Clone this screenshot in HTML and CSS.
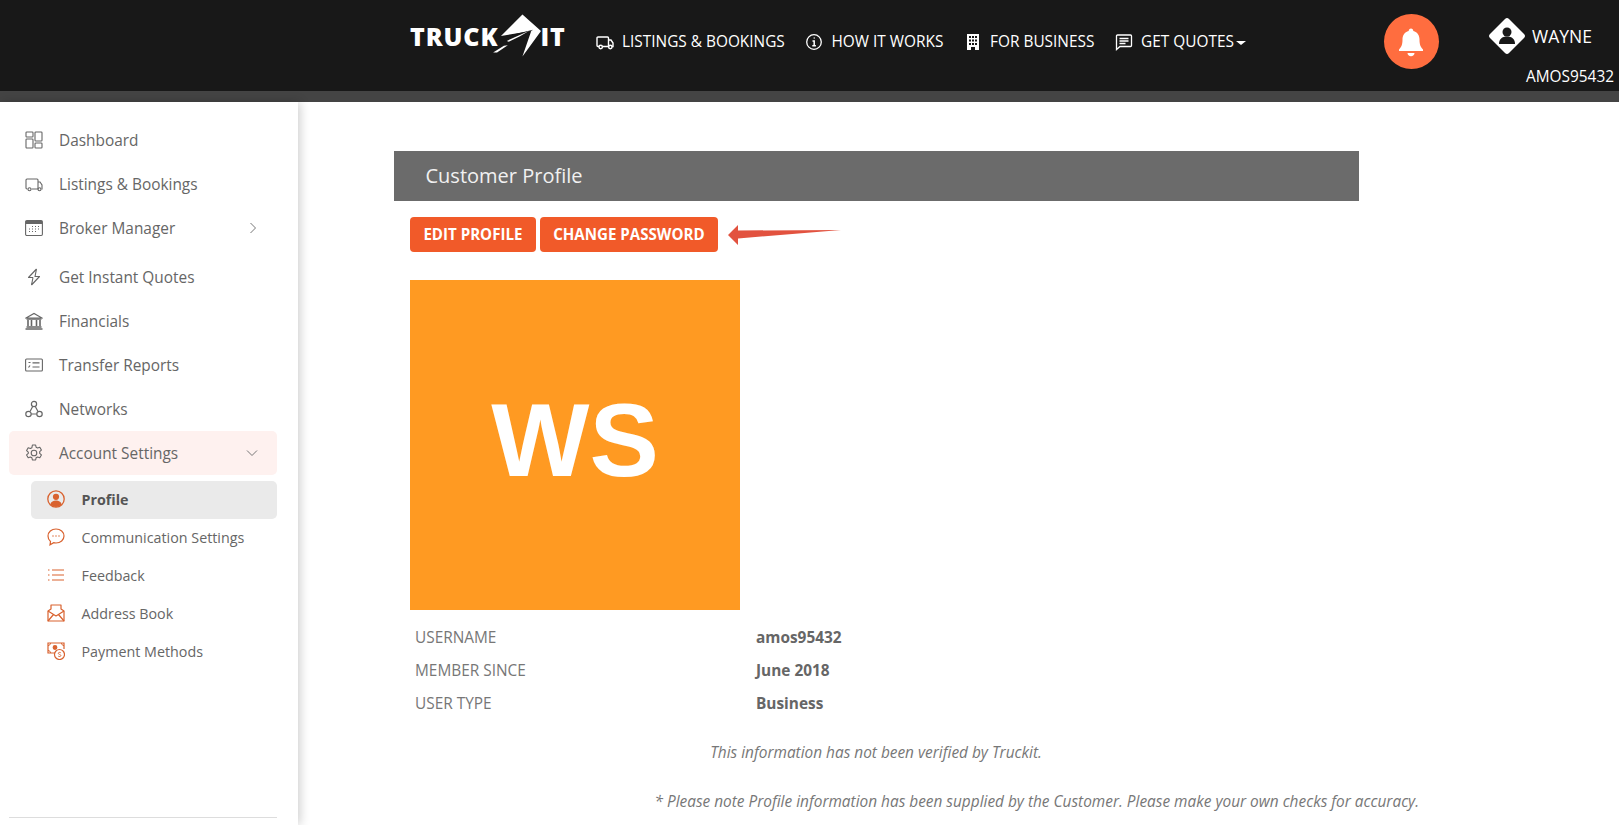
FILE: index.html
```html
<!DOCTYPE html>
<html lang="en">
<head>
    <meta charset="UTF-8">
    <meta name="viewport" content="width=device-width, initial-scale=1.0">
    <title>Customer Profile</title>
    <link rel="stylesheet" href="styles.css">
</head>
<body>

    <header class="topbar">
        <div class="logo">
            <span class="logo-word">TRUCK</span>
            <svg class="logo-mark" width="42" height="44" viewBox="0 0 43 44">
                <path d="M2 22 L24 0 L43 17 L24 43 L33 17 Z" fill="#fff"/>
                <path d="M0 24 L35 15.500 L19 25 L5 27 Z" fill="#181818"/>
                <path d="M8 27 L31 16.500 L21 22.500 L10 28 Z" fill="#fff"/>
                <path d="M-6 39 L5 32 L9 31.500 L-2 39 Z" fill="#fff"/>
            </svg>
            <span class="logo-word">IT</span>
        </div>

        <nav class="topnav">
            <a class="topnav-item">
                <svg width="18" height="18" viewBox="0 0 18 18" fill="none" stroke="#fff" stroke-width="1.400"><path d="M3 13.500H2a1 1 0 0 1-1-1V5a1 1 0 0 1 1-1h9.500a1 1 0 0 1 1 1v8.500H6.500M12.500 7h2.500l2 3v3.500h-1"/><circle cx="4.700" cy="14" r="1.700"/><circle cx="14.300" cy="14" r="1.700"/></svg>
                LISTINGS &amp; BOOKINGS
            </a>
            <a class="topnav-item">
                <svg width="18" height="18" viewBox="0 0 18 18" fill="none" stroke="#fff" stroke-width="1.300"><circle cx="9" cy="9" r="7.300"/><path d="M7.500 8h1.700v4.500M7.300 12.700h3.600M8.700 5h1" stroke-width="1.500"/></svg>
                HOW IT WORKS
            </a>
            <a class="topnav-item">
                <svg width="18" height="18" viewBox="0 0 18 18"><path d="M3 1h12v16h-4v-3H7v3H3Z" fill="#fff"/><path d="M5 3h2v2H5zM8 3h2v2H8zM11 3h2v2h-2zM5 6.500h2v2H5zM8 6.500h2v2H8zM11 6.500h2v2h-2zM5 10h2v2H5zM8 10h2v2H8zM11 10h2v2h-2z" fill="#181818"/></svg>
                FOR BUSINESS
            </a>
            <a class="topnav-item">
                <svg width="18" height="18" viewBox="0 0 18 18" fill="none" stroke="#fff" stroke-width="1.300"><path d="M1.500 16.500V3a1 1 0 0 1 1-1h13a1 1 0 0 1 1 1v9.500a1 1 0 0 1-1 1H5Z"/><path d="M4.500 5.500h9M4.500 8h9M4.500 10.500h6" stroke-width="1.400"/></svg>
                <span>GET QUOTES<span class="caret"></span></span>
            </a>
        </nav>

        <div class="bell">
            <svg width="28" height="30" viewBox="0 0 28 30"><path d="M14 1.500c1.400 0 2.300 1 2.300 2.400 4.200 1 6.200 4.500 6.200 8.600 0 5 1 7.500 3.500 10v1.500H2V22.500c2.500-2.500 3.500-5 3.500-10 0-4.100 2-7.600 6.200-8.600 0-1.400.9-2.400 2.300-2.400Z" fill="#fff"/><path d="M10.500 26h7c0 2-1.500 3.200-3.500 3.200s-3.500-1.200-3.500-3.200Z" fill="#fff"/></svg>
        </div>

        <div class="user">
            <div class="user-top">
                <svg width="36" height="36" viewBox="0 0 36 36"><path d="M16 1 Q18 -1 20 1 L35 16 Q37 18 35 20 L20 35 Q18 37 16 35 L1 20 Q-1 18 1 16Z" fill="#fff"/><circle cx="18" cy="14" r="4.500" fill="#181818"/><path d="M10 26c0-5 3-7.500 8-7.500s8 2.500 8 7.500Z" fill="#181818"/></svg>
                <span>WAYNE</span>
            </div>
            <div class="user-id">AMOS95432</div>
        </div>
    </header>
    <div class="topbar-band"></div>

    <div class="shell">
        <aside class="sidebar">
            <a class="side-item">
                <svg width="18" height="18" viewBox="0 0 18 18" fill="none" stroke="#666" stroke-width="1.100"><rect x="1" y="1" width="7" height="5" rx=".8"/><rect x="1" y="8" width="7" height="9" rx=".8"/><rect x="10" y="1" width="7" height="9" rx=".8"/><rect x="10" y="12" width="7" height="5" rx=".8"/></svg>
                Dashboard
            </a>
            <a class="side-item">
                <svg width="18" height="18" viewBox="0 0 18 18" fill="none" stroke="#666" stroke-width="1.100"><path d="M2.500 14H2a1 1 0 0 1-1-1V5a1 1 0 0 1 1-1h10a1 1 0 0 1 1 1v9H6.500M13 7h2l2 3v4h-.500"/><circle cx="4.500" cy="14.300" r="1.500"/><circle cx="14.500" cy="14.300" r="1.500"/></svg>
                Listings &amp; Bookings
            </a>
            <a class="side-item side-item-gap">
                <svg width="18" height="18" viewBox="0 0 18 18" fill="none" stroke="#666" stroke-width="1.100"><rect x=".6" y="1.500" width="16.800" height="15" rx="1.200"/><path d="M1 3.500h16" stroke-width="3"/><path d="M7 7.500h1M10 7.500h1M13 7.500h1M4 10h1M7 10h1M10 10h1M13 10h1M4 12.500h1M7 12.500h1M10 12.500h1" stroke-width="1.200"/></svg>
                Broker Manager
                <svg class="chevron" width="10" height="12" viewBox="0 0 10 12" fill="none" stroke="#777" stroke-width="1"><path d="M2.500 1 L7.500 6 L2.500 11"/></svg>
            </a>
            <a class="side-item">
                <svg width="18" height="18" viewBox="0 0 18 18" fill="none" stroke="#666" stroke-width="1.100" stroke-linejoin="round"><path d="M11.500 1 L3.500 9.500 H8 M6.500 17 L14.500 8.500 H10 L11.500 1 M6.500 17 L8 9.500"/></svg>
                Get Instant Quotes
            </a>
            <a class="side-item">
                <svg width="18" height="18" viewBox="0 0 18 18" fill="none" stroke="#666" stroke-width="1.100"><path d="M1 6 L9 1.500 L17 6Z"/><path d="M3 8v6M6.500 8v6M11.500 8v6M15 8v6" stroke-width="1.600"/><path d="M1.500 7h15M1.500 15h15M.5 17h17" stroke-width="1.300"/></svg>
                Financials
            </a>
            <a class="side-item">
                <svg width="18" height="18" viewBox="0 0 18 18" fill="none" stroke="#666" stroke-width="1.100"><rect x=".6" y="3" width="16.800" height="12" rx="1"/><path d="M7.500 6.800h7M7.500 11h7M3.500 6.500h2M3.500 11.500l1.500-2" stroke-width="1.200"/></svg>
                Transfer Reports
            </a>
            <a class="side-item">
                <svg width="18" height="18" viewBox="0 0 18 18" fill="none" stroke="#666" stroke-width="1.200"><circle cx="9" cy="4" r="2.600"/><circle cx="3.500" cy="14" r="2.700"/><circle cx="14.500" cy="14" r="2.700"/><path d="M7.700 6.500 L5 11.500M10.300 6.500 L13 11.500M6.200 14h5.600"/></svg>
                Networks
            </a>
            <a class="side-item side-item-open">
                <svg width="18" height="18" viewBox="0 0 18 18" fill="none" stroke="#666" stroke-width="1.100" stroke-linejoin="round"><path d="M7.400 1h3.200l.5 2.200 1.500.8 2.200-.7 1.600 2.800-1.700 1.500v1.800l1.700 1.500-1.600 2.800-2.200-.7-1.500.8-.5 2.200H7.400l-.5-2.200-1.500-.8-2.200.7-1.600-2.800 1.700-1.500V8.100L1.600 6.600l1.600-2.800 2.200.7 1.500-.8Z"/><circle cx="9" cy="9" r="2.800"/></svg>
                Account Settings
                <svg class="chevron" width="12" height="10" viewBox="0 0 12 10" fill="none" stroke="#777" stroke-width="1"><path d="M1 2.500 L6 7.500 L11 2.500"/></svg>
            </a>

            <div class="sub-list">
                <a class="sub-item sub-item-active">
                    <svg width="18" height="18" viewBox="0 0 18 18"><circle cx="9" cy="9" r="8.200" fill="none" stroke="#d9622f" stroke-width="1.300"/><circle cx="9" cy="6.800" r="3.100" fill="#d9622f"/><path d="M3.300 14.500c.8-2.800 3-3.900 5.700-3.900s4.900 1.100 5.700 3.900A8 8 0 0 1 9 17a8 8 0 0 1-5.700-2.500Z" fill="#d9622f"/></svg>
                    Profile
                </a>
                <a class="sub-item">
                    <svg width="18" height="18" viewBox="0 0 18 18" fill="none" stroke="#d9622f" stroke-width="1.200"><path d="M9 1c4.500 0 8 3 8 7s-3.500 7-8 7c-.8 0-1.600-.1-2.300-.3L3 16.800l.5-3.300C1.900 12.200 1 10.200 1 8c0-4 3.500-7 8-7Z"/><path d="M5.500 8h1M8.500 8h1M11.500 8h1" stroke-width="1.500"/></svg>
                    Communication Settings
                </a>
                <a class="sub-item">
                    <svg width="18" height="18" viewBox="0 0 18 18" fill="none" stroke="#d9622f" stroke-width="1.100"><path d="M5 4h12M5 9h12M5 14h12M1 4h1.500M1 9h1.500M1 14h1.500"/></svg>
                    Feedback
                </a>
                <a class="sub-item">
                    <svg width="18" height="18" viewBox="0 0 18 18" fill="none" stroke="#d9622f" stroke-width="1.200" stroke-linejoin="round"><path d="M1 7 L4 5 V1 H14 V5 L17 7 V17 H1Z"/><path d="M1 7 L9 12 L17 7M1 17 L6.500 10.500M17 17 L11.500 10.500"/></svg>
                    Address Book
                </a>
                <a class="sub-item">
                    <svg width="18" height="18" viewBox="0 0 18 18" fill="none" stroke="#d9622f" stroke-width="1.200"><path d="M8 11H1V1h16v6"/><path d="M1 3.500c1.500 0 2.500-1 2.500-2.500M14.500 1c0 1.500 1 2.500 2.500 2.500M1 8.500c1.500 0 2.500 1 2.500 2.500" stroke-width="1"/><circle cx="8" cy="5.500" r="1.800" fill="#d9622f"/><circle cx="12.500" cy="12.500" r="5"/><path d="M13.800 10.800c-.8-.7-2.500-.6-2.500.6s2.600.9 2.600 2.100-1.800 1.300-2.700.6" stroke-width=".9"/></svg>
                    Payment Methods
                </a>
            </div>

            <div class="side-rule"></div>
        </aside>

        <main class="content">
            <h1 class="page-title">Customer Profile</h1>

            <div class="actions">
                <button type="button" class="btn">EDIT PROFILE</button>
                <button type="button" class="btn">CHANGE PASSWORD</button>
                <svg class="arrow" width="114" height="22" viewBox="0 0 114 22"><path d="M0 11 L10 1 L10 6.500 L113 6 L10 14.500 L10 21Z" fill="#e2523f"/></svg>
            </div>

            <div class="avatar">WS</div>

            <table class="details">
                <tr><td>USERNAME</td><th>amos95432</th></tr>
                <tr><td>MEMBER SINCE</td><th>June 2018</th></tr>
                <tr><td>USER TYPE</td><th>Business</th></tr>
            </table>

            <p class="note">This information has not been verified by Truckit.</p>
            <p class="note note-wide">* Please note Profile information has been supplied by the Customer. Please make your own checks for accuracy.</p>
        </main>
    </div>

</body>
</html>
```

FILE: styles.css
```css
* {
    box-sizing: border-box;
}

html, body {
    height: 825px;
    overflow: hidden;
}

body {
    margin: 0;
    font-family: 'Open Sans', sans-serif;
    background-color: white;
    color: #666;
}

/* top bar */
.topbar {
    height: 91px;
    background-color: #181818;
    color: white;
    display: flex;
    padding-left: 410px;
}

.topbar-band {
    height: 11px;
    background-color: #444;
}

.logo {
    display: flex;
    align-items: center;
    height: 71px;
    width: 186px;
}

.logo-word {
    font-size: 25px;
    font-weight: 800;
    letter-spacing: 0.9px;
}

.logo-mark {
    overflow: visible;
}

.topnav {
    display: flex;
    align-items: center;
    height: 83px;
    gap: 20.700px;
}

.topnav-item {
    display: flex;
    align-items: center;
    gap: 8px;
    font-size: 15.400px;
}

.caret {
    display: inline-block;
    margin-left: 2px;
    vertical-align: middle;
    border-left: 5px solid transparent;
    border-right: 5px solid transparent;
    border-top: 4px solid white;
}

.bell {
    width: 55px;
    height: 55px;
    margin: 14px 0 0 138px;
    border-radius: 50%;
    background-color: #ff6d3f;
    display: flex;
    align-items: center;
    justify-content: center;
}

.user {
    margin-left: auto;
    padding-right: 5px;
    display: flex;
    flex-direction: column;
    align-items: flex-end;
}

.user-top {
    display: flex;
    align-items: center;
    gap: 7px;
    margin: 18px 22px 0 0;
    font-size: 17.500px;
}

.user-id {
    font-size: 15.400px;
    margin-top: 12px;
}

/* sidebar */
.shell {
    display: flex;
    height: 723px;
}

.sidebar {
    width: 298px;
    flex-shrink: 0;
    display: flex;
    flex-direction: column;
    padding: 16px 21px 7px 9px;
    box-shadow: 2px 0 10px rgba(0, 0, 0, 0.2);
}

.side-item {
    display: flex;
    align-items: center;
    gap: 16px;
    height: 44px;
    padding: 0 19px 0 16px;
    font-size: 15.400px;
    color: #666;
    flex-shrink: 0;
}

.side-item-gap {
    margin-bottom: 5px;
}

.side-item-open {
    height: 44px;
    background-color: #fef1ef;
    border-radius: 5px;
}

.chevron {
    margin-left: auto;
}

.sub-list {
    margin: 6px 0 0 22px;
}

.sub-item {
    display: flex;
    align-items: center;
    gap: 16.500px;
    height: 38px;
    padding: 0 16px 2px;
    font-size: 14.300px;
    color: #666;
}

.sub-item-active {
    background-color: #eaeaea;
    border-radius: 5px;
    font-weight: 700;
    color: #555;
}

.side-rule {
    margin-top: auto;
    border-top: 1px solid #ddd;
}

/* profile */
.content {
    flex: 1;
    padding: 49px 0 0 95.500px;
}

.page-title {
    width: 965px;
    height: 50px;
    margin: 0;
    padding-left: 32px;
    background-color: #6b6b6b;
    color: #f1f1f1;
    font-size: 20px;
    font-weight: 400;
    line-height: 50px;
}

.actions {
    display: flex;
    align-items: center;
    gap: 4px;
    margin: 16px 0 0 16.500px;
}

.btn {
    height: 35px;
    padding: 0 13.400px 1px;
    border: none;
    border-radius: 4px;
    background-color: #f15a29;
    color: #fff;
    font-family: inherit;
    font-size: 15.100px;
    font-weight: 700;
}

.arrow {
    margin: 0 0 0 6px;
}

.avatar {
    width: 330px;
    height: 330px;
    margin: 28px 0 0 16.500px;
    background-color: #ff9a22;
    color: white;
    font-family: 'Liberation Sans', sans-serif;
    font-size: 104px;
    font-weight: 700;
    line-height: 320px;
    text-align: center;
}

.details {
    border-collapse: collapse;
    margin: 11px 0 0 21.500px;
    font-size: 15.400px;
}

.details td {
    width: 341px;
    height: 33px;
    padding: 0;
    color: #777;
}

.details th {
    padding: 0;
    text-align: left;
    font-weight: 700;
    color: #666;
}

.note {
    width: 965px;
    margin: 22px 0 0;
    font-size: 15.400px;
    font-style: italic;
    text-align: center;
    color: #777;
}

.note-wide {
    width: auto;
    margin: 28px 0 0 261px;
    text-align: left;
    white-space: nowrap;
}
```
